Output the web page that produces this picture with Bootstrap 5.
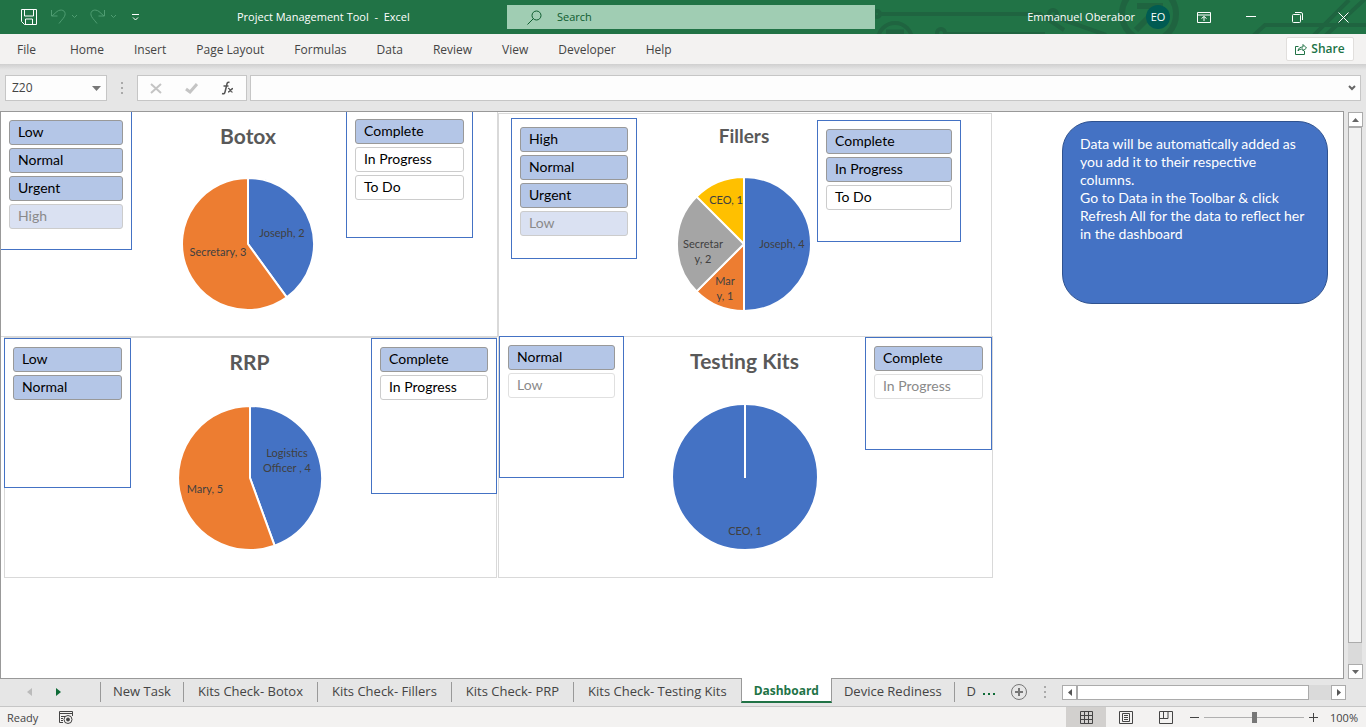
<!DOCTYPE html>
<html lang="en">
<head>
<meta charset="utf-8">
<meta name="viewport" content="width=device-width, initial-scale=1">
<title>Project Management Tool - Excel</title>
<link href="https://cdn.jsdelivr.net/npm/bootstrap@5.3.0/dist/css/bootstrap.min.css" rel="stylesheet">
<script src="https://cdn.jsdelivr.net/npm/bootstrap@5.3.0/dist/js/bootstrap.bundle.min.js"></script>
<style>
  :root { --xl-green:#217346; --xl-blue:#4472c4; --xl-grey:#e6e6e6; --xl-light:#f3f2f1; --xl-line:#999; }
  body { font-family:"Open Sans","Noto Sans",sans-serif; font-size:12px; line-height:16px; color:#444; background:var(--xl-grey); }
  button { font:inherit; color:inherit; }
  .bare { border:0; background:none; padding:0; display:inline-flex; align-items:center; justify-content:center; }
  svg { display:block; flex:none; }

  .titlebar { display:grid; grid-template-columns:507fr 368fr 491fr; height:34px; background:var(--xl-green); color:#fff; font-size:11px; }
  .quick-tools { padding-left:20px; gap:4px; }
  .doc-title { margin-left:90px; }
  .search-box { height:24px; background:#a0cdb3; color:#0e5c2f; padding:0 20px; gap:15px; }
  .search-box input { border:0; background:none; color:inherit; outline:0; padding:0; }
  .search-box input::placeholder { color:#0e5c2f; opacity:1; }
  .circuit { right:0; top:0; }
  .avatar { width:24px; height:24px; background:#005b52; margin-left:11px; margin-right:18px; }
  .win-btn { width:46px; height:34px; }
  .display-btn { width:32px; height:34px; }

  .ribbon { height:30px; background:var(--xl-light); padding-left:2px; padding-right:12px; }
  .ribbon .nav-link { color:#444; padding:8px 15px 6px; }
  .share { height:24px; width:68px; background:#fff; border:1px solid #e1dfdd; border-radius:2px; color:var(--xl-green); font-weight:600; gap:4px; }

  .formula-row { height:47px; padding:11px 5px 10px; background:linear-gradient(#cfcfcf,#e6e6e6 6px); }
  .field { background:#fdfdfd; border:1px solid #c6c6c6; height:26px; }
  .name-box { width:102px; padding:0 5px 0 6px; }
  .name-box input, .formula-box input { border:0; background:none; outline:0; padding:0; min-width:0; width:100%; color:#444; }
  .fx-tools { width:110px; margin-right:3px; }
  .grip { width:30px; }

  .sheet { background:#fff; border:1px solid var(--xl-line); min-width:0; overflow:hidden; }
  .chart-grid { display:grid; grid-template-columns:497px 495px; grid-template-rows:225px 241px; flex:none; }
  .pie-chart { border:1px solid #d9d9d9; padding:9px 2px 0 0; display:flex; flex-direction:column; align-items:center; gap:19px; font-family:Lato,"Open Sans",sans-serif; }
  .pie-chart h2 { font-size:21px; line-height:28px; font-weight:700; color:#595959; margin:0; }
  .chart-botox { border-width:0 1px 1px 0; padding-top:10px; }
  .chart-fillers { margin:1px 1px 0 0; padding-top:8px; }
  .chart-fillers h2 { font-size:19px; }
  .chart-rrp { margin:0 1px 0 3px; padding-top:10px; gap:27px; }
  .chart-kits { margin-top:-1px; padding-top:10px; gap:27px; }
  .pie text { font-size:11px; fill:#404040; text-anchor:middle; }
  .pie path, .pie circle { stroke:#fff; stroke-width:2; stroke-linejoin:round; }

  /* slicers float above the charts */
  .slicer { position:absolute; background:#fff; border:1px solid var(--xl-blue); padding:8px; display:flex; flex-direction:column; gap:3px; font-size:14px; font-family:Lato,"Open Sans",sans-serif; }
  .slicer button { height:25px; flex:none; border:1px solid #ccc; border-radius:3px; background:#fff; color:#000; text-align:left; padding:0 8px 2px; line-height:21px; }
  .slicer .on { background:#b4c6e7; border-color:#999; }
  .slicer .off { color:#8a8a8a; border-color:#e0e0e0; }
  .slicer .faded { background:#dae1f2; color:#8a8a8a; border-color:#ccc; }
  .s-botox-l { left:-1px; top:-1px; width:132px; height:139px; }
  .s-botox-r { left:345px; top:-2px; width:127px; height:128px; }
  .s-fill-l { left:12px; top:4px; width:126px; height:141px; }
  .s-fill-r { left:318px; top:6px; width:144px; height:122px; }
  .s-rrp-l { left:-1px; top:0; width:127px; height:150px; }
  .s-rrp-r { right:-1px; top:0; width:126px; height:156px; }
  .s-kits-l { left:0; top:-1px; width:125px; height:142px; }
  .s-kits-r { right:0; top:0; width:127px; height:113px; }

  .note { width:266px; height:183px; margin:9px 0 0 69px; padding:13px 17px; background:var(--xl-blue); border:1px solid #2f528f; border-radius:30px; color:#fff; font:14px/18px Lato,"Open Sans",sans-serif; flex:none; }

  .v-scroll { width:22px; padding:1px 4px 0; }
  .scroll-btn { width:15px; height:15px; background:#fff; border:1px solid #ababab; flex:none; }
  .v-thumb { flex:515 0 0; border:1px solid #ababab; background:#f2f2f2; }
  .v-track { flex:21 0 0; background:#dadada; }
  .h-scroll { width:284px; margin-right:20px; }
  .h-thumb { flex:231 0 0; height:15px; border:1px solid #ababab; background:#fff; }
  .h-track { flex:22 0 0; height:15px; background:#dadada; }
  .scroll-grip { left:-18px; }

  .tab-row { height:29px; margin-top:-1px; border-bottom:1px solid #c6c6c6; position:relative; }
  .tab-arrows { width:100px; padding-left:27px; gap:24px; }
  .sheet-tabs a { color:#444; text-decoration:none; white-space:nowrap; padding:0 12px; height:20px; border-left:1px solid var(--xl-line); margin-top:4px; font-size:13px; line-height:18px; }
  .sheet-tabs a.wide { padding:0 14px; }
  .sheet-tabs a.current { background:#fff; height:25px; margin-top:0; padding:4px 12px 0; border-right:1px solid var(--xl-line); border-bottom:2px solid var(--xl-green); color:var(--xl-green); font-size:12px; font-weight:700; }
  .sheet-tabs a.current + a { border-left:0; }
  .sheet-tabs a.short { width:21px; padding-right:0; }

  .status { height:20px; background:var(--xl-light); padding-left:7px; font-size:11px; }
  .status span { padding-top:2px; }
  .view-btn { width:40px; height:20px; }
  .view-btn.active { background:#d2d0ce; }
  .zoom { appearance:none; width:100px; height:12px; background:linear-gradient(#b0b0b0,#b0b0b0) center/100% 1px no-repeat; margin:0 5px; }
  .zoom::-webkit-slider-thumb { appearance:none; width:5px; height:11px; background:#777; }
  .zoom-value { margin:0 8px 0 12px; }
</style>
</head>
<body class="vh-100 d-flex flex-column overflow-hidden">

<header class="titlebar position-relative">
  <svg class="circuit position-absolute" width="491" height="34" fill="none" stroke="#1f6440" stroke-width="4" aria-hidden="true">
    <circle cx="2" cy="14" r="3"/><path d="M5 14h160l24 16"/><circle cx="20" cy="40" r="17"/><path d="M11 32h18" stroke-width="5"/>
    <circle cx="66" cy="33" r="4"/><path d="M70 34h100"/><circle cx="178" cy="14" r="4"/><path d="M183 18l48 17"/>
    <circle cx="274" cy="14" r="27" stroke-width="6"/><path d="M262 6h23v20M283 8l-22 22" stroke-width="6"/>
    <path d="M378 36l12-11h101M438 36l36-36M450 36l40-37"/>
  </svg>
  <div class="quick-tools d-flex align-items-center">
    <button class="bare" aria-label="Save"><svg width="18" height="18" fill="none" stroke="#fff"><path d="M1.500 1.500h15v15h-12l-3-3zM4.500 2v6h9V2M5.500 16v-5h7v5"/></svg></button>
    <button class="bare ms-2" aria-label="Undo"><svg width="28" height="18" fill="none" stroke="#4f9d72"><path d="M1.500 2v6h6M2 8l5-4.500c4-3 9-1 8 3.500-.5 2.500-3 4.500-6 8.500"/><path d="M22 7l2.500 2.500L27 7"/></svg></button>
    <button class="bare ms-2" aria-label="Redo"><svg width="28" height="18" fill="none" stroke="#4f9d72"><path d="M14.500 2v6h-6M14 8L9 3.500C5 .5 0 2.500 1 7c.5 2.500 3 4.500 6 8.500"/><path d="M21 7l2.500 2.500L26 7"/></svg></button>
    <button class="bare ms-2" aria-label="Customize quick access"><svg width="13" height="10" fill="none" stroke="#fff"><path d="M2 2.500h7M3 5.500l2.500 2.500L8 5.500"/></svg></button>
    <span class="doc-title text-nowrap">Project Management Tool&nbsp; -&nbsp; Excel</span>
  </div>
  <label class="search-box d-flex align-items-center align-self-center">
    <svg width="15" height="15" fill="none" stroke="#0e5c2f"><circle cx="9.500" cy="5.500" r="4.500"/><path d="M6.500 8.500L.5 14.500"/></svg>
    <input type="text" placeholder="Search" aria-label="Search">
  </label>
  <div class="d-flex align-items-center justify-content-end position-relative">
    <span class="text-nowrap">Emmanuel Oberabor</span>
    <span class="avatar rounded-circle d-flex align-items-center justify-content-center">EO</span>
    <button class="bare display-btn me-2" aria-label="Ribbon display"><svg width="14" height="11" fill="none" stroke="#fff"><path d="M.5.5h13v10H.5zM.5 3h13M7 9V4.500M4.500 6.500L7 4.500l2.500 2"/></svg></button>
    <button class="bare win-btn" aria-label="Minimize"><svg width="10" height="10" stroke="#fff"><path d="M0 4.500h10"/></svg></button>
    <button class="bare win-btn" aria-label="Restore"><svg width="11" height="11" fill="none" stroke="#fff"><rect x=".5" y="2.500" width="8" height="8" rx="1"/><path d="M3 .5h6q1.500 0 1.500 1.500v6"/></svg></button>
    <button class="bare win-btn" aria-label="Close"><svg width="11" height="11" stroke="#fff"><path d="M.5.500l10 10M10.500.500l-10 10"/></svg></button>
  </div>
</header>

<nav class="ribbon d-flex align-items-center justify-content-between" aria-label="Ribbon">
  <div class="nav flex-nowrap text-nowrap">
    <a class="nav-link" href="#">File</a><a class="nav-link ms-1" href="#">Home</a><a class="nav-link" href="#">Insert</a><a class="nav-link" href="#">Page Layout</a><a class="nav-link" href="#">Formulas</a><a class="nav-link" href="#">Data</a><a class="nav-link" href="#">Review</a><a class="nav-link" href="#">View</a><a class="nav-link" href="#">Developer</a><a class="nav-link" href="#">Help</a>
  </div>
  <button class="bare share"><svg width="12" height="12" fill="none" stroke="#217346"><path d="M3.500 3.500h-3v8h9V8M3 8c.5-3 2-4 5-4V1.500l3.500 3.500L8 8V6C5.500 6 4 6.500 3 8z"/></svg>Share</button>
</nav>

<div class="formula-row d-flex">
  <div class="field name-box d-flex align-items-center">
    <input type="text" value="Z20" aria-label="Name box">
    <svg width="9" height="5" fill="#777"><path d="M0 0h9L4.500 5z"/></svg>
  </div>
  <div class="grip d-flex align-items-center justify-content-center"><svg width="2" height="12" fill="#aaa"><path d="M0 0h2v2H0zM0 5h2v2H0zM0 10h2v2H0z"/></svg></div>
  <div class="field fx-tools d-flex align-items-center justify-content-around">
    <button class="bare" aria-label="Cancel"><svg width="12" height="11" stroke="#c4c4c4" stroke-width="2"><path d="M1 1l10 9M11 1L1 10"/></svg></button>
    <button class="bare" aria-label="Enter"><svg width="13" height="11" fill="none" stroke="#c4c4c4" stroke-width="3"><path d="M1 6l4 3 7-8"/></svg></button>
    <button class="bare" aria-label="Insert function"><svg width="13" height="14" fill="none" stroke="#555"><path d="M8.500 1.500C6.500.5 6 2 5.500 5L4 11c-.5 2-1.500 2-3 1.500M2.500 5h5" stroke-width="1.500"/><path d="M7 7.500c2-1 2 4 4.500 3.500M12 7.500c-2 0-3 3.500-5 3.500" stroke-width="1.300"/></svg></button>
  </div>
  <div class="field formula-box d-flex flex-grow-1 align-items-center px-1">
    <input type="text" aria-label="Formula">
    <svg width="8" height="6" fill="none" stroke="#666" stroke-width="2"><path d="M1 1l3 3 3-3"/></svg>
  </div>
</div>

<main class="d-flex flex-grow-1" style="min-height:0">
  <div class="sheet d-flex flex-grow-1 align-items-start">
    <div class="chart-grid">
      <section class="pie-chart chart-botox position-relative">
        <h2>Botox</h2>
        <svg class="pie" width="150" height="150" viewBox="-75 -75 150 150">
          <path fill="#4472c4" d="M0 0V-66A66 66 0 0 1 38.800 53.400z"/><path fill="#ed7d31" d="M0 0L38.800 53.400A66 66 0 1 1 0-66z"/>
          <text x="34" y="-7">Joseph, 2</text><text x="-30" y="12">Secretary, 3</text>
        </svg>
        <div class="slicer s-botox-l"><button class="on">Low</button><button class="on">Normal</button><button class="on">Urgent</button><button class="faded">High</button></div>
        <div class="slicer s-botox-r"><button class="on">Complete</button><button>In Progress</button><button>To Do</button></div>
      </section>
      <section class="pie-chart chart-fillers position-relative">
        <h2>Fillers</h2>
        <svg class="pie" width="150" height="150" viewBox="-75 -75 150 150">
          <path fill="#4472c4" d="M0 0V-67A67 67 0 0 1 0 67z"/><path fill="#ed7d31" d="M0 0V67A67 67 0 0 1-47.400 47.400z"/><path fill="#a5a5a5" d="M0 0L-47.400 47.400A67 67 0 0 1-47.400-47.400z"/><path fill="#ffc000" d="M0 0L-47.400-47.400A67 67 0 0 1 0-67z"/>
          <text x="38" y="4">Joseph, 4</text><text x="-19" y="41">Mar</text><text x="-19" y="56">y, 1</text><text x="-41" y="4">Secretar</text><text x="-41" y="19">y, 2</text><text x="-18" y="-40">CEO, 1</text>
        </svg>
        <div class="slicer s-fill-l"><button class="on">High</button><button class="on">Normal</button><button class="on">Urgent</button><button class="faded">Low</button></div>
        <div class="slicer s-fill-r"><button class="on">Complete</button><button class="on">In Progress</button><button>To Do</button></div>
      </section>
      <section class="pie-chart chart-rrp position-relative">
        <h2>RRP</h2>
        <svg class="pie" width="150" height="150" viewBox="-75 -75 150 150">
          <path fill="#4472c4" d="M0 0V-72A72 72 0 0 1 24.600 67.700z"/><path fill="#ed7d31" d="M0 0L24.600 67.700A72 72 0 1 1 0-72z"/>
          <text x="37" y="-21">Logistics</text><text x="37" y="-6">Officer , 4</text><text x="-45" y="15">Mary, 5</text>
        </svg>
        <div class="slicer s-rrp-l"><button class="on">Low</button><button class="on">Normal</button></div>
        <div class="slicer s-rrp-r"><button class="on">Complete</button><button>In Progress</button></div>
      </section>
      <section class="pie-chart chart-kits position-relative">
        <h2>Testing Kits</h2>
        <svg class="pie" width="150" height="150" viewBox="-75 -75 150 150">
          <circle r="73" fill="#4472c4"/><path d="M0-72V1"/><text x="0" y="58">CEO, 1</text>
        </svg>
        <div class="slicer s-kits-l"><button class="on">Normal</button><button class="off">Low</button></div>
        <div class="slicer s-kits-r"><button class="on">Complete</button><button class="off">In Progress</button></div>
      </section>
    </div>
    <div class="note">Data will be automatically added as you add it to their respective columns.<br>Go to Data in the Toolbar &amp; click Refresh All for the data to reflect her in the dashboard</div>
  </div>
  <div class="v-scroll d-flex flex-column">
    <button class="bare scroll-btn" aria-label="Scroll up"><svg width="7" height="4" fill="#666"><path d="M0 4h7L3.500 0z"/></svg></button>
    <div class="v-thumb"></div><div class="v-track"></div>
    <button class="bare scroll-btn" aria-label="Scroll down"><svg width="7" height="4" fill="#666"><path d="M0 0h7L3.500 4z"/></svg></button>
  </div>
</main>

<div class="tab-row d-flex">
  <div class="tab-arrows d-flex align-items-center">
    <button class="bare" aria-label="Previous sheets"><svg width="5" height="8" fill="#bbb"><path d="M5 0v8L0 4z"/></svg></button>
    <button class="bare" aria-label="Next sheets"><svg width="5" height="8" fill="#0e6b37"><path d="M0 0v8l5-4z"/></svg></button>
  </div>
  <nav class="sheet-tabs d-flex align-items-start" aria-label="Sheets">
    <a href="#">New Task</a><a class="wide" href="#">Kits Check- Botox</a><a class="wide" href="#">Kits Check- Fillers</a><a class="wide" href="#">Kits Check- PRP</a><a class="wide" href="#">Kits Check- Testing Kits</a><a class="current" href="#" aria-current="page">Dashboard</a><a href="#">Device Rediness</a><a class="short" href="#">D</a>
  </nav>
  <div class="d-flex align-items-center ms-2 gap-3 pe-1">
    <button class="bare" aria-label="More sheets"><svg width="12" height="8" fill="#0e6b37"><path d="M0 5h2v2H0zM5 5h2v2H5zM10 5h2v2h-2z"/></svg></button>
    <button class="bare" aria-label="New sheet"><svg width="16" height="16" fill="none" stroke="#777"><circle cx="8" cy="8" r="7.500"/><path d="M4 8h8M8 4v8" stroke-width="2"/></svg></button>
  </div>
  <div class="h-scroll d-flex align-items-center ms-auto position-relative">
    <svg class="scroll-grip position-absolute" width="2" height="12" fill="#aaa"><path d="M0 0h2v2H0zM0 5h2v2H0zM0 10h2v2H0z"/></svg>
    <button class="bare scroll-btn" aria-label="Scroll left"><svg width="4" height="7" fill="#555"><path d="M4 0v7L0 3.500z"/></svg></button>
    <div class="h-thumb"></div><div class="h-track"></div>
    <button class="bare scroll-btn" aria-label="Scroll right"><svg width="4" height="7" fill="#555"><path d="M0 0v7l4-3.500z"/></svg></button>
  </div>
</div>

<footer class="status d-flex align-items-center">
  <span>Ready</span>
  <button class="bare ms-3 ps-1" aria-label="Record macro"><svg width="16" height="13" fill="none" stroke="#444"><path d="M5 11.500H1.500V.5h13V5M1.500 2.500h13M3 5.500h4M3 7.500h2M3 9.500h2"/><circle cx="10" cy="8.500" r="4"/><circle cx="10" cy="8.500" r="1.500" fill="#444"/></svg></button>
  <div class="d-flex align-items-center ms-auto">
    <button class="bare view-btn active" aria-label="Normal view"><svg width="13" height="13" fill="none" stroke="#444"><path d="M.5.5h12v12H.5zM4.500 0v13M8.500 0v13M0 4.500h13M0 8.500h13"/></svg></button>
    <button class="bare view-btn" aria-label="Page layout view"><svg width="14" height="13" fill="none" stroke="#444"><path d="M.5.5h13v12H.5zM3.500 2.500h7v8h-7zM5 4.500h4M5 6.500h4M5 8.500h4"/></svg></button>
    <button class="bare view-btn" aria-label="Page break view"><svg width="14" height="13" fill="none" stroke="#444"><path d="M.5.5h13v12H.5zM0 7.500h9V0M4.500 0v7"/></svg></button>
    <button class="bare ms-1" aria-label="Zoom out"><svg width="9" height="9" stroke="#444"><path d="M0 4.500h9"/></svg></button>
    <input class="zoom" type="range" min="0" max="200" value="100" aria-label="Zoom">
    <button class="bare" aria-label="Zoom in"><svg width="9" height="9" stroke="#444"><path d="M0 4.500h9M4.500 0v9"/></svg></button>
    <span class="zoom-value">100%</span>
  </div>
</footer>
</body>
</html>
